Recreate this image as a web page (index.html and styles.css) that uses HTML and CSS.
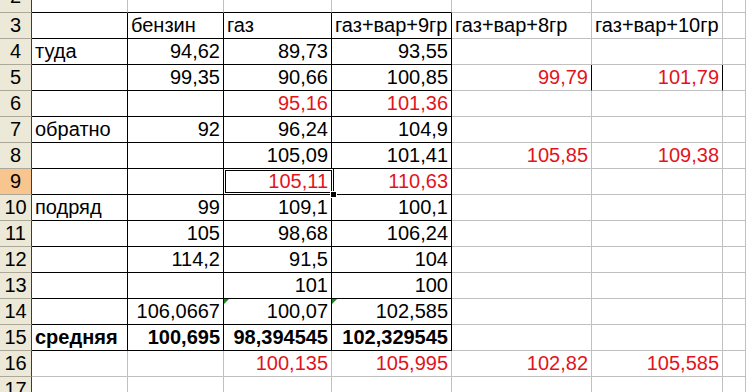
FILE: index.html
```html
<!DOCTYPE html>
<html lang="ru">

<head>
  <meta charset="UTF-8">
  <meta name="viewport" content="width=device-width, initial-scale=1.0">
  <title>Расход топлива</title>
  <link rel="stylesheet" href="styles.css">
</head>

<body>

  <div class="sheet">
    <!-- row 2 is only partly scrolled into view -->
    <div class="row row-tall">
      <div class="cell rn">2</div>
      <div class="cell under"></div>
      <div class="cell under"></div>
      <div class="cell under"></div>
      <div class="cell under"></div>
      <div class="cell"></div>
      <div class="cell"></div>
      <div class="cell"></div>
    </div>

    <div class="row">
      <div class="cell rn">3</div>
      <div class="cell box"></div>
      <div class="cell box">бензин</div>
      <div class="cell box">газ</div>
      <div class="cell box">газ+вар+9гр</div>
      <div class="cell">газ+вар+8гр</div>
      <div class="cell">газ+вар+10гр</div>
      <div class="cell"></div>
    </div>

    <div class="row">
      <div class="cell rn">4</div>
      <div class="cell box">туда</div>
      <div class="cell box num">94,62</div>
      <div class="cell box num">89,73</div>
      <div class="cell box num">93,55</div>
      <div class="cell"></div>
      <div class="cell"></div>
      <div class="cell"></div>
    </div>

    <div class="row">
      <div class="cell rn">5</div>
      <div class="cell box"></div>
      <div class="cell box num">99,35</div>
      <div class="cell box num">90,66</div>
      <div class="cell box num">100,85</div>
      <div class="cell edge num red">99,79</div>
      <div class="cell edge num red">101,79</div>
      <div class="cell"></div>
    </div>

    <div class="row">
      <div class="cell rn">6</div>
      <div class="cell box"></div>
      <div class="cell box"></div>
      <div class="cell box num red">95,16</div>
      <div class="cell box num red">101,36</div>
      <div class="cell"></div>
      <div class="cell"></div>
      <div class="cell"></div>
    </div>

    <div class="row">
      <div class="cell rn">7</div>
      <div class="cell box">обратно</div>
      <div class="cell box num">92</div>
      <div class="cell box num">96,24</div>
      <div class="cell box num">104,9</div>
      <div class="cell"></div>
      <div class="cell"></div>
      <div class="cell"></div>
    </div>

    <div class="row">
      <div class="cell rn">8</div>
      <div class="cell box"></div>
      <div class="cell box"></div>
      <div class="cell box num">105,09</div>
      <div class="cell box num">101,41</div>
      <div class="cell num red">105,85</div>
      <div class="cell num red">109,38</div>
      <div class="cell"></div>
    </div>

    <div class="row">
      <div class="cell rn active">9</div>
      <div class="cell box"></div>
      <div class="cell box"></div>
      <div class="cell box num red sel">105,11</div>
      <div class="cell box num red">110,63</div>
      <div class="cell"></div>
      <div class="cell"></div>
      <div class="cell"></div>
    </div>

    <div class="row">
      <div class="cell rn">10</div>
      <div class="cell box">подряд</div>
      <div class="cell box num">99</div>
      <div class="cell box num">109,1</div>
      <div class="cell box num">100,1</div>
      <div class="cell"></div>
      <div class="cell"></div>
      <div class="cell"></div>
    </div>

    <div class="row">
      <div class="cell rn">11</div>
      <div class="cell box"></div>
      <div class="cell box num">105</div>
      <div class="cell box num">98,68</div>
      <div class="cell box num">106,24</div>
      <div class="cell"></div>
      <div class="cell"></div>
      <div class="cell"></div>
    </div>

    <div class="row">
      <div class="cell rn">12</div>
      <div class="cell box"></div>
      <div class="cell box num">114,2</div>
      <div class="cell box num">91,5</div>
      <div class="cell box num">104</div>
      <div class="cell"></div>
      <div class="cell"></div>
      <div class="cell"></div>
    </div>

    <div class="row">
      <div class="cell rn">13</div>
      <div class="cell box"></div>
      <div class="cell box"></div>
      <div class="cell box num">101</div>
      <div class="cell box num">100</div>
      <div class="cell"></div>
      <div class="cell"></div>
      <div class="cell"></div>
    </div>

    <div class="row">
      <div class="cell rn">14</div>
      <div class="cell box"></div>
      <div class="cell box num">106,0667</div>
      <div class="cell box num err">100,07</div>
      <div class="cell box num err">102,585</div>
      <div class="cell"></div>
      <div class="cell"></div>
      <div class="cell"></div>
    </div>

    <div class="row">
      <div class="cell rn">15</div>
      <div class="cell box bold">средняя</div>
      <div class="cell box num bold">100,695</div>
      <div class="cell box num bold">98,394545</div>
      <div class="cell box num bold">102,329545</div>
      <div class="cell"></div>
      <div class="cell"></div>
      <div class="cell"></div>
    </div>

    <div class="row">
      <div class="cell rn">16</div>
      <div class="cell"></div>
      <div class="cell"></div>
      <div class="cell num red">100,135</div>
      <div class="cell num red">105,995</div>
      <div class="cell num red">102,82</div>
      <div class="cell num red">105,585</div>
      <div class="cell"></div>
    </div>

    <div class="row">
      <div class="cell rn">17</div>
      <div class="cell"></div>
      <div class="cell"></div>
      <div class="cell"></div>
      <div class="cell"></div>
      <div class="cell"></div>
      <div class="cell"></div>
      <div class="cell"></div>
    </div>
  </div>

</body>

</html>
```

FILE: styles.css
```css
body {
  margin: 0;
  background-color: white;
  font-family: "Liberation Sans", Arial, sans-serif;
  font-size: 20px;
  color: black;
  overflow: hidden;
}

.sheet {
  margin-top: -19px;
}

.row {
  display: grid;
  grid-template-columns: 32px 96px 96px 108px 120px 140px 131px 1fr;
  height: 26px;
}

.row-tall {
  height: 32px;
}

.cell {
  position: relative;
  border-right: 1px solid #c0c0c0;
  border-bottom: 1px solid #c0c0c0;
  padding: 0 3px;
  line-height: 25px;
  white-space: nowrap;
}

.row-tall .cell {
  line-height: 31px;
}

/* row numbers */
.rn {
  background-color: #ece9d8;
  border-right-color: #3c3c3c;
  border-bottom-color: #aca899;
  text-align: center;
  padding: 0;
}

.rn.active {
  background-color: #f8c58e;
}

.num {
  text-align: right;
}

.red {
  color: #e3131b;
}

.bold {
  font-weight: bold;
}

/* black table borders */
.box {
  border-right-color: black;
  border-bottom-color: black;
}

.under {
  border-bottom-color: black;
}

.edge {
  border-right-color: black;
}

/* green error marker */
.err::before {
  content: "";
  position: absolute;
  left: 0;
  top: 0;
  border-top: 5px solid #178a17;
  border-right: 5px solid transparent;
}

/* active cell */
.sel::after {
  content: "";
  position: absolute;
  left: -1px;
  top: -1px;
  right: -3px;
  bottom: -1px;
  border: 1px solid black;
  box-shadow: inset 0 0 0 1px white, inset 0 0 0 2px black;
  z-index: 1;
}

.sel::before {
  content: "";
  position: absolute;
  left: 106px;
  top: 22px;
  width: 5px;
  height: 5px;
  background-color: black;
  border: 1px solid white;
  z-index: 2;
}
```
